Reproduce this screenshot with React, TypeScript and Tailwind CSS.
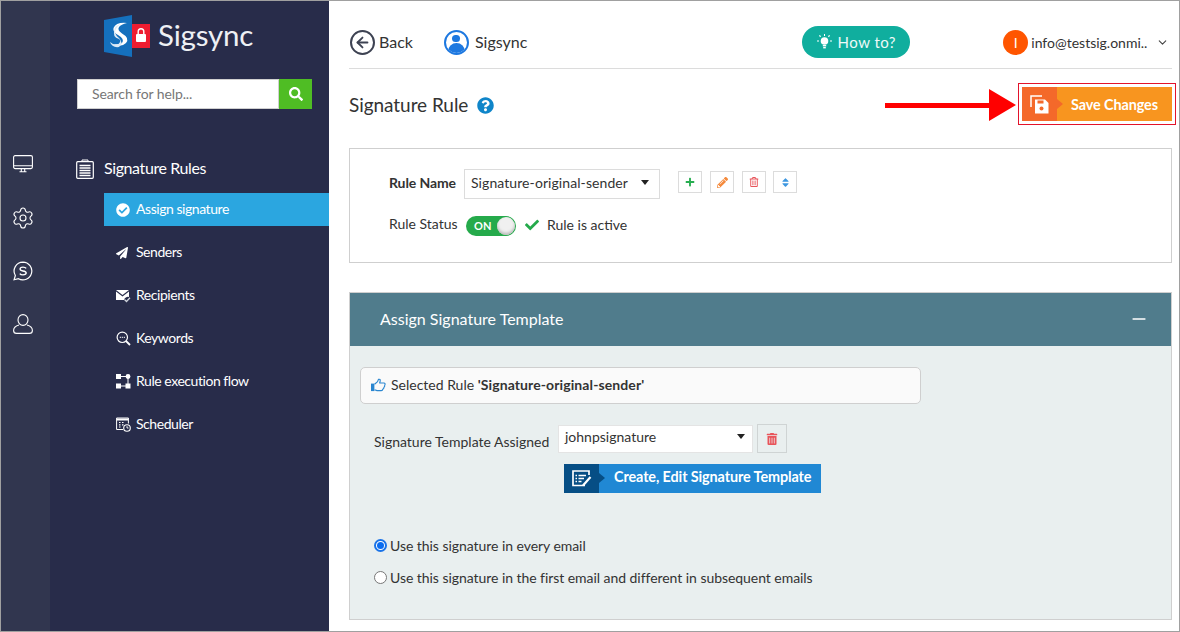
import React from 'react';
import { FaPlus, FaPencilAlt, FaRegTrashAlt, FaTrashAlt, FaSort, FaCheck, FaCheckCircle, FaPaperPlane, FaSearch, FaQuestionCircle } from 'react-icons/fa';
import { ChevronDown, ArrowLeft, Minus, Settings } from 'lucide-react';

const Logo = () => (
    <svg width="46" height="42" viewBox="0 0 46 42">
        <path d="M0 5 L28 0 V42 L0 37 Z" fill="#1570bd" />
        <rect x="28" y="9" width="18" height="24" fill="#ee1c30" />
        <path d="M23 8 Q12 7 9.5 13 Q8.5 17 14 20 Q21 24 18 28 Q15 30 9 29 Q17 33 22 28 Q26 23 18 18.5 Q13 15 15 12 Q17 9.5 23 8 Z" fill="#fff" />
        <path d="M17 9 Q10 11 10.5 15 Q8 22 15 24 Q18 26 14 29.5 Q9 30 6 27 Q8 33 15 32 Q20 28 15 23 Q9 18 12 14 Q13 11 17 9 Z" fill="#dce9f5" />
        <rect x="32" y="19" width="10" height="8" rx="1" fill="#fff" />
        <path d="M34.2 19 V16.5 A2.8 2.8 0 0 1 39.8 16.5 V19" fill="none" stroke="#fff" strokeWidth="1.4" />
    </svg>
);

const Monitor = () => (
    <svg width="20" height="18" viewBox="0 0 20 18" fill="none" stroke="#fff" strokeWidth="1.1" className="mb-[2px]">
        <rect x="0.6" y="0.6" width="18.8" height="13" rx="1.5" />
        <path d="M0.6 10.8 H19.4 M6.5 16.8 H13.5 M8.3 14 V16.5 M11.7 14 V16.5" />
    </svg>
);

const DollarChat = () => (
    <svg width="20" height="20" viewBox="0 0 22 22" fill="none" stroke="#fff" strokeWidth="1.3">
        <path d="M11 1.2 A9.8 9.8 0 1 1 6 19.5 L1.2 20.6 L2.6 16 A9.8 9.8 0 0 1 11 1.2 Z" />
        <path d="M14.5 8.2 Q13.5 6.8 11 6.8 Q7.8 6.8 7.8 8.8 Q7.8 10.6 11 11 Q14.5 11.4 14.5 13.3 Q14.5 15.2 11 15.2 Q8.4 15.2 7.5 13.8" strokeWidth="1.5" />
    </svg>
);

const UserOutline = () => (
    <svg width="20" height="20" viewBox="0 0 20 20" fill="none" stroke="#fff" strokeWidth="1.1">
        <ellipse cx="10" cy="6" rx="5" ry="5.4" />
        <path d="M6 11 C2.5 12 0.6 14 0.6 16.4 C0.6 18.4 2 19.4 3.5 19.4 H16.5 C18 19.4 19.4 18.4 19.4 16.4 C19.4 14 17.5 12 14 11" />
    </svg>
);

const RulesIcon = () => (
    <svg width="18" height="20" viewBox="0 0 18 20" fill="none">
        <rect x="0.7" y="2.7" width="16.6" height="16.6" rx="1" stroke="#fff" strokeWidth="1.2" />
        <path d="M6 2.5 V1 H12 V2.5" stroke="#fff" strokeWidth="1" />
        <path d="M3.5 6.5 H14.5 M3.5 9 H14.5 M3.5 11.5 H14.5 M3.5 14 H14.5 M3.5 16.5 H14.5" stroke="#fff" strokeWidth="1.4" />
    </svg>
);

const MailCheck = () => (
    <svg width="15" height="14" viewBox="0 0 15 14" fill="#fff">
        <path d="M0 1 H13 L6.5 6 Z" />
        <path d="M0 2.6 L6.5 7.6 L13 2.6 V8 A4 4 0 0 0 8 11 H0 Z" />
        <path d="M8.5 10.5 L10.5 12.5 L14 8.8" fill="none" stroke="#cfd3dc" strokeWidth="1.3" />
    </svg>
);

const KeywordIcon = () => (
    <svg width="15" height="15" viewBox="0 0 15 15" fill="none" stroke="#fff" strokeWidth="1.2">
        <circle cx="6.3" cy="6.3" r="5.2" />
        <path d="M10 10 L14 14" strokeWidth="1.8" />
        <path d="M3.8 6.3 H4.8 M5.8 6.3 H6.8 M7.8 6.3 H8.8" />
    </svg>
);

const FlowIcon = () => (
    <svg width="15" height="15" viewBox="0 0 15 15" fill="#fff">
        <rect x="0" y="0" width="5" height="5" />
        <rect x="0" y="9.5" width="5" height="5" />
        <rect x="9.5" y="9.5" width="5" height="5" />
        <circle cx="12" cy="2.5" r="2.4" />
        <path d="M5 2 H10 V3 H5 Z M5 11.5 H10 V12.5 H5 Z M11.5 4 H12.5 V10 H11.5 Z" />
    </svg>
);

const SchedulerIcon = () => (
    <svg width="15" height="15" viewBox="0 0 15 15" fill="none" stroke="#fff">
        <path d="M7 12.5 H0.6 V1 H12.4 V6.5" strokeWidth="1" />
        <path d="M0.6 2.5 H12.4" strokeWidth="2" />
        <path d="M3 5.5 H4.5 M6 5.5 H7.5 M3 7.8 H4.5 M6 7.8 H7.5 M3 10 H4.5" strokeWidth="1.2" />
        <circle cx="11" cy="11" r="3.3" strokeWidth="1.1" />
        <path d="M11 9.2 V11 H12.5" strokeWidth="0.9" />
    </svg>
);

const SaveIcon = () => (
    <svg width="19" height="19" viewBox="0 0 19 19" fill="none">
        <path d="M1 12 V1 H12" stroke="#fff" strokeWidth="1.5" />
        <path d="M5 4.5 H15 L18.5 8 V18.5 H5 Z" fill="#fff" />
        <rect x="7.5" y="5.5" width="6" height="3" fill="#f4692a" />
        <circle cx="11.5" cy="13.5" r="2" fill="#f4692a" />
    </svg>
);

const TemplateIcon = () => (
    <svg width="20" height="17" viewBox="0 0 20 17" fill="none">
        <path d="M13 15.5 H1 V1 H17 V5" stroke="#fff" strokeWidth="1.7" />
        <path d="M3.5 5.5 H5 M6.5 5.5 H14 M3.5 8.5 H5 M6.5 8.5 H12 M3.5 11.5 H5 M6.5 11.5 H9.5" stroke="#fff" strokeWidth="1.5" />
        <path d="M11 15.5 L18.5 7" stroke="#fff" strokeWidth="2.2" />
    </svg>
);

const Bulb = () => (
    <svg width="15" height="16" viewBox="0 0 15 16" fill="#fff">
        <circle cx="7.5" cy="7" r="3.8" />
        <rect x="5.8" y="11" width="3.4" height="1.4" />
        <rect x="6.2" y="13" width="2.6" height="1.4" />
        <path d="M7 0 H8 V2 H7 Z M0 6.5 H2 V7.5 H0 Z M13 6.5 H15 V7.5 H13 Z M2 1.6 L3 1 L4 2.6 L3 3.2 Z M13 1.6 L12 1 L11 2.6 L12 3.2 Z" />
    </svg>
);

const ThumbOutline = () => (
    <svg width="15" height="14" viewBox="0 0 16 14" fill="none">
        <rect x="0" y="5.5" width="3.6" height="8" fill="#2a86d0" />
        <path d="M3.8 6.2 L7 3.4 L8 0.9 Q10.2 0.4 9.8 2.8 L9.2 4.8 H14 Q15.8 5.4 14.6 7.2 Q14.8 9 13.8 9.4 Q13.8 11.2 12.6 11.4 Q12.4 13 11 13 H6.5 L3.8 12" stroke="#2a86d0" strokeWidth="1.2" strokeLinejoin="round" />
    </svg>
);

const SideItem = ({ icon, label, active }: { icon: React.ReactNode; label: string; active?: boolean }) => (
    <div className={`h-[33px] mb-[10px] flex items-center pl-[12px] text-[14px] tracking-[-0.45px] text-white ${active ? 'bg-[#2ba6e0]' : ''}`}>
        <span className="w-[20px] flex items-center">{icon}</span>
        <span className="pb-[2px]">{label}</span>
    </div>
);

const ToolBtn = ({ children }: { children: React.ReactNode }) => (
    <span className="w-[24px] h-[22px] border border-[#dcdcdc] flex items-center justify-center">{children}</span>
);

const Caret = () => <span className="w-0 h-0 border-x-[4px] border-x-transparent border-t-[5px] border-t-[#222]" />;

export default function App() {
    return (
        <div className="relative w-[1180px] h-[632px] overflow-hidden flex bg-white border-t border-l border-[#a0a0a0] text-[#2a2a3a] font-['Lato',sans-serif]">
            {/* Icon rail */}
            <div className="w-[49px] bg-[#31364f] flex flex-col items-center pt-[154px] pr-[5px] gap-[33px] shrink-0">
                <Monitor />
                <Settings size={24} color="#fff" strokeWidth={1.1} className="-my-[2px]" />
                <DollarChat />
                <UserOutline />
            </div>

            {/* Sidebar */}
            <div className="w-[279px] bg-[#282c4a] shrink-0 flex flex-col">
                <div className="flex items-center pl-[54px] mt-[14px] h-[42px]">
                    <Logo />
                    <span className="ml-[8px] pb-[2px] text-[29.5px] leading-none text-[#eef0f4] tracking-[-0.2px]">Sigsync</span>
                </div>
                <div className="flex ml-[27px] mt-[22px] w-[235px] h-[30px]">
                    <div className="w-[202px] bg-white border border-[#d0d0d0] pl-[14px] pb-[2px] flex items-center text-[14px] tracking-[-0.1px] text-[#777]">Search for help...</div>
                    <div className="w-[33px] bg-[#4fbd24] flex items-center justify-center"><FaSearch size={14} color="#fff" /></div>
                </div>
                <div className="flex items-center ml-[26px] mt-[48px] h-[24px] text-[16px] text-white tracking-[-0.4px]">
                    <RulesIcon />
                    <span className="ml-[10px] pb-[2px]">Signature Rules</span>
                </div>
                <div className="ml-[54px] mt-[12px]">
                    <SideItem active label="Assign signature" icon={<FaCheckCircle size={14} color="#fff" />} />
                    <SideItem label="Senders" icon={<FaPaperPlane size={12} color="#fff" />} />
                    <SideItem label="Recipients" icon={<MailCheck />} />
                    <SideItem label="Keywords" icon={<KeywordIcon />} />
                    <SideItem label="Rule execution flow" icon={<FlowIcon />} />
                    <SideItem label="Scheduler" icon={<SchedulerIcon />} />
                </div>
            </div>

            {/* Main */}
            <div className="flex-1 min-w-0 pl-[20px] pr-[8px] flex flex-col">
                <div className="h-[68px] pt-[15px] pl-[1px] border-b border-[#dcdcdc] flex items-center text-[16px]">
                    <span className="w-[25px] h-[25px] rounded-full border-2 border-[#3d4252] flex items-center justify-center">
                        <ArrowLeft size={17} color="#3d4252" strokeWidth={2.6} />
                    </span>
                    <span className="ml-[4px] text-[#333]">Back</span>
                    <span className="ml-[31px] w-[25px] h-[25px] rounded-full border-2 border-[#1d78e0] overflow-hidden flex flex-col items-center">
                        <span className="mt-[3px] w-[8px] h-[8px] rounded-full bg-[#1d78e0]" />
                        <span className="mt-[1px] w-[17px] h-[10px] rounded-t-full bg-[#1d78e0]" />
                    </span>
                    <span className="ml-[6px] text-[#333]">Sigsync</span>
                    <span className="ml-[275px] w-[108px] h-[32px] rounded-full bg-[#10ae9e] flex items-center justify-center gap-[6px] text-[15px] text-[#eefaf8] tracking-[0.5px]">
                        <Bulb />How to?
                    </span>
                    <span className="ml-[93px] w-[25px] h-[25px] rounded-full bg-[#ff5500] flex items-center justify-center text-white text-[14px]">I</span>
                    <span className="ml-[3px] text-[14px] text-[#333]">info@testsig.onmi..</span>
                    <ChevronDown size={13} color="#444" className="ml-[9px]" />
                </div>

                <div className="h-[79px] flex items-center justify-between">
                    <div className="flex items-center gap-[9px] -mt-[7px]">
                        <span className="text-[19px] tracking-[-0.05px] text-[#333]">Signature Rule</span>
                        <FaQuestionCircle size={17} color="#0f85c9" />
                    </div>
                    <div className="-mr-[4px] mt-[-9px] p-[3px] border border-[#e3132b]">
                        <div className="w-[150px] h-[34px] flex bg-[#f8951f] text-white font-bold text-[14.4px]">
                            <span className="relative w-[35px] bg-[#f4692a] flex items-center justify-center">
                                <SaveIcon />
                                <span className="absolute -right-[6px] top-[12px] border-y-[5px] border-y-transparent border-l-[6px] border-l-[#f4692a]" />
                            </span>
                            <span className="flex-1 flex items-center justify-center pt-[2px] tracking-[-0.1px]">Save Changes</span>
                        </div>
                    </div>
                </div>

                <div className="h-[115px] border border-[#cfcfcf] pl-[39px] pt-[20px] text-[14px] text-[#333]">
                    <div className="flex items-center h-[30px]">
                        <span className="font-bold w-[75px] pb-[4px] tracking-[-0.1px]">Rule Name</span>
                        <span className="w-[196px] h-[30px] border border-[#dcdcdc] flex items-center justify-between pl-[6px] pr-[10px] pb-[3px] tracking-[0.08px]">
                            Signature-original-sender<Caret />
                        </span>
                        <div className="flex gap-[8px] ml-[18px] -mt-[4px]">
                            <ToolBtn><FaPlus size={10} color="#27ae50" /></ToolBtn>
                            <ToolBtn><FaPencilAlt size={11} color="#f58a3c" /></ToolBtn>
                            <ToolBtn><FaRegTrashAlt size={10} color="#e8545a" /></ToolBtn>
                            <span className="-ml-[1px]"><ToolBtn><FaSort size={11} color="#3d97e0" /></ToolBtn></span>
                        </div>
                    </div>
                    <div className="flex items-center h-[22px] mt-[16px]">
                        <span className="w-[77px] mb-[6px]">Rule Status</span>
                        <span className="relative w-[50px] h-[20px] rounded-full bg-[#25aa4b] text-white text-[11px] font-bold flex items-center pl-[8px]">
                            ON
                            <span className="absolute right-[1px] top-[1px] w-[18px] h-[18px] rounded-full bg-[#f0f0f0] shadow-[inset_0_-2px_3px_#bbb]" />
                        </span>
                        <FaCheck size={14} color="#25aa4b" className="ml-[9px] mb-[2px]" />
                        <span className="ml-[8px] mb-[4px]">Rule is active</span>
                    </div>
                </div>

                <div className="mt-[29px] h-[328px] border border-[#cfcfcf] bg-[#e9efef] flex flex-col text-[14px] text-[#333]">
                    <div className="h-[53px] bg-[#507c8c] flex items-center justify-between pl-[30px] pr-[22px] pb-[2px] text-white text-[16px]">
                        Assign Signature Template
                        <Minus size={20} color="#fff" strokeWidth={2} />
                    </div>
                    <div className="ml-[10px] mt-[21px] w-[561px] h-[37px] rounded-[5px] border border-[#cfcfcf] bg-[#fafafa] flex items-center pl-[10px] pb-[2px] gap-[5px]">
                        <ThumbOutline />
                        <span>Selected Rule <b className="tracking-[0.1px]">'Signature-original-sender'</b></span>
                    </div>
                    <div className="flex mt-[20px] ml-[24px] h-[29px]">
                        <span className="w-[184px] pt-[6px] flex items-center">Signature Template Assigned</span>
                        <span className="mt-[1px] w-[195px] h-[28px] bg-white border border-[#e4e4e4] flex items-center justify-between pl-[6px] pr-[7px] pb-[6px]">
                            johnpsignature<Caret />
                        </span>
                        <span className="ml-[4px] w-[30px] h-[29px] border border-[#cfd4d4] bg-[#e9efef] flex items-center justify-center">
                            <FaTrashAlt size={12} color="#e8545a" />
                        </span>
                    </div>
                    <div className="ml-[214px] mt-[11px] w-[257px] h-[29px] flex bg-[#2088d4] text-white font-bold text-[14.4px]">
                        <span className="relative w-[35px] bg-[#064e85] flex items-center justify-center">
                            <TemplateIcon />
                            <span className="absolute -right-[6px] top-[9px] border-y-[5px] border-y-transparent border-l-[6px] border-l-[#064e85]" />
                        </span>
                        <span className="flex-1 flex items-center pl-[15px] pb-[3px] tracking-[-0.1px]">Create, Edit Signature Template</span>
                    </div>
                    <div className="ml-[24px] mt-[41px] flex items-center gap-[3px] h-[22px] tracking-[-0.05px]">
                        <span className="w-[13px] h-[13px] rounded-full border-2 border-[#1a73e8] bg-white flex items-center justify-center">
                            <span className="w-[7px] h-[7px] rounded-full bg-[#0a6cf0]" />
                        </span>
                        Use this signature in every email
                    </div>
                    <div className="ml-[24px] mt-[10px] flex items-center gap-[3px] h-[22px] tracking-[-0.05px]">
                        <span className="w-[13px] h-[13px] rounded-full border border-[#777] bg-white" />
                        Use this signature in the first email and different in subsequent emails
                    </div>
                </div>
            </div>

            {/* Annotation arrow */}
            <div className="absolute left-[884px] top-[88px] flex items-center">
                <div className="w-[104px] h-[5px] bg-[#ff0000]" />
                <div className="w-0 h-0 border-y-[16px] border-y-transparent border-l-[27px] border-l-[#ff0000]" />
            </div>

            <div className="absolute left-0 right-0 bottom-0 h-px bg-[#a0a0a0]" />
            <div className="absolute top-0 bottom-0 right-0 w-px bg-[#a0a0a0]" />
        </div>
    );
}
